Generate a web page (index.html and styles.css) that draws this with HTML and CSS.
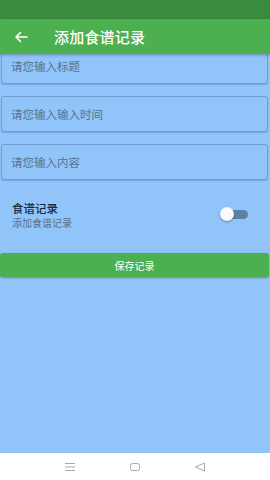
FILE: index.html
```html
<!DOCTYPE html>
<html>
<head>
<meta charset="utf-8">
<link rel="stylesheet" href="styles.css">
</head>
<body>
<div class="screen">
  <div class="status"></div>
  <div class="toolbar">
    <svg class="back" width="14" height="12" viewBox="0 0 14 12"><path d="M13 6H2M6.5 1.5L2 6l4.5 4.5" fill="none" stroke="#fff" stroke-width="1.6" stroke-linecap="round" stroke-linejoin="round"/></svg>
    <div class="title">添加食谱记录</div>
  </div>
  <div class="content">
    <div class="field first">请您输入标题</div>
    <div class="field">请您输入输入时间</div>
    <div class="field">请您输入内容</div>
    <div class="row">
      <div class="labels">
        <div class="label">食谱记录</div>
        <div class="sub">添加食谱记录</div>
      </div>
      <div class="switch"><div class="track"></div><div class="thumb"></div></div>
    </div>
    <div class="button">保存记录</div>
  </div>
  <div class="nav">
    <svg width="12" height="10" viewBox="0 0 12 10"><path d="M1 1.5h10M1 5h10M1 8.5h10" stroke="#a9a9a9" stroke-width="1"/></svg>
    <svg width="12" height="10" viewBox="0 0 12 10"><rect x="1.5" y="1.5" width="9" height="7" rx="2" fill="none" stroke="#a9a9a9" stroke-width="1"/></svg>
    <svg width="12" height="10" viewBox="0 0 12 10"><path d="M10.5 1v8L1.5 5z" fill="none" stroke="#a9a9a9" stroke-width="1" stroke-linejoin="round"/></svg>
  </div>
</div>
</body>
</html>
```
FILE: styles.css
```css
html, body {
  margin: 0;
  padding: 0;
}
body {
  font-family: "Noto Sans CJK SC", "Noto Sans", sans-serif;
}
.screen {
  width: 270px;
  height: 480px;
  display: flex;
  flex-direction: column;
  overflow: hidden;
  background: #91c4f9;
}
.status {
  height: 19px;
  background: #3a8b3e;
  flex: none;
}
.toolbar {
  height: 35px;
  flex: none;
  background: #4caf50;
  display: flex;
  align-items: center;
  position: relative;
  z-index: 1;
  box-shadow: 0 1px 3px rgba(0,0,0,0.3);
}
.back {
  margin-left: 14px;
}
.title {
  margin-left: 26px;
  color: #fff;
  font-size: 15px;
  font-weight: 500;
  letter-spacing: 0.2px;
}
.content {
  flex: 1;
  display: flex;
  flex-direction: column;
  overflow: hidden;
}
.field {
  height: 34px;
  margin: 12px 2px 0 1px;
  border: 1px solid #6f9cd0;
  border-radius: 3px;
  box-shadow: 0 1px 1px rgba(40,80,130,0.25);
  display: flex;
  align-items: center;
  padding-left: 9px;
  font-size: 11.5px;
  color: #56728f;
  flex: none;
}
.field.first {
  margin-top: -6px;
}
.row {
  margin-top: 20px;
  display: flex;
  align-items: center;
  justify-content: space-between;
  padding: 0 22px 0 12px;
  height: 28px;
  flex: none;
}
.labels {
  display: flex;
  flex-direction: column;
  gap: 2px;
}
.label {
  font-size: 11.5px;
  line-height: 14px;
  color: #1c2b3b;
  font-weight: 500;
}
.sub {
  font-size: 10px;
  line-height: 11px;
  color: #56708c;
}
.switch {
  position: relative;
  width: 28px;
  height: 14px;
}
.track {
  position: absolute;
  left: 6px;
  top: 2.5px;
  width: 22px;
  height: 9px;
  border-radius: 5px;
  background: #5c7fa5;
}
.thumb {
  position: absolute;
  left: 0;
  top: 0;
  width: 14px;
  height: 14px;
  border-radius: 50%;
  background: #fafafa;
  box-shadow: 0 1px 2px rgba(0,0,0,0.35);
}
.button {
  margin: 25px 1px 0 0;
  height: 24px;
  border-radius: 3px;
  background: #4caf50;
  color: #fff;
  font-size: 10px;
  display: flex;
  align-items: center;
  justify-content: center;
  box-shadow: 0 1px 2px rgba(0,0,0,0.3);
  flex: none;
}
.nav {
  height: 27px;
  flex: none;
  background: #fff;
  display: flex;
  align-items: center;
  justify-content: center;
  gap: 53px;
}
```
